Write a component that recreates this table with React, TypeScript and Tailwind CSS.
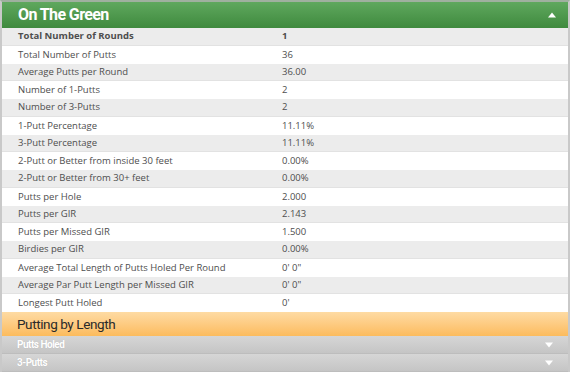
import React from "react";

const rows: [string, string][] = [
  ["Total Number of Rounds", "1"],
  ["Total Number of Putts", "36"],
  ["Average Putts per Round", "36.00"],
  ["Number of 1-Putts", "2"],
  ["Number of 3-Putts", "2"],
  ["1-Putt Percentage", "11.11%"],
  ["3-Putt Percentage", "11.11%"],
  ["2-Putt or Better from inside 30 feet", "0.00%"],
  ["2-Putt or Better from 30+ feet", "0.00%"],
  ["Putts per Hole", "2.000"],
  ["Putts per GIR", "2.143"],
  ["Putts per Missed GIR", "1.500"],
  ["Birdies per GIR", "0.00%"],
  ["Average Total Length of Putts Holed Per Round", "0' 0\""],
  ["Average Par Putt Length per Missed GIR", "0' 0\""],
  ["Longest Putt Holed", "0'"],
];

function Tri({ up }: { up?: boolean }) {
  return (
    <svg width="8" height="6" viewBox="0 0 8 6">
      {up ? <polygon points="4,0.5 8,5.5 0,5.5" fill="#fff" /> : <polygon points="0,0.5 8,0.5 4,5.5" fill="#fff" />}
    </svg>
  );
}

export default function App() {
  return (
    <div className="w-[570px] h-[375px] bg-white overflow-hidden" style={{ fontFamily: '"Open Sans", sans-serif' }}>
      <div className="border-x-2 border-t-2 border-x-[#c9c9c9] border-t-[#9fb09f]">
        <div className="h-[26px] bg-gradient-to-b from-[#5fa85e] to-[#3f8a3e] flex items-center justify-between pl-[16px] pr-[12px]">
          <span className="text-white text-[16px] font-bold tracking-[-0.6px] leading-none" style={{ fontFamily: '"Roboto", sans-serif' }}>
            On The Green
          </span>
          <Tri up />
        </div>
        <div className="flex flex-col">
          {rows.map(([k, v], i) => (
            <div
              key={k}
              className={`h-[17.75px] flex items-center text-[9.5px] text-[#4e4e4e] ${i % 2 === 0 ? "bg-[#ececec] border-b border-[#e2e2e2]" : "bg-white"} ${i === 0 ? "font-bold" : ""}`}
            >
              <span className="w-[280px] pl-[16px] whitespace-nowrap">{k}</span>
              <span>{v}</span>
            </div>
          ))}
        </div>
        <div className="h-[24px] bg-gradient-to-b from-[#fedba3] to-[#fcbb5c] flex items-center pl-[15px]">
          <span className="text-[13.5px] text-[#2a2a2a] tracking-[-0.4px]" style={{ fontFamily: '"Roboto", sans-serif' }}>
            Putting by Length
          </span>
        </div>
        <div className="h-[18px] bg-gradient-to-b from-[#d6d6d6] to-[#c5c5c5] border-b border-[#bdbdbd] flex items-center justify-between pl-[15px] pr-[15px]">
          <span className="text-white text-[10px] font-bold tracking-[-0.5px]" style={{ fontFamily: '"Roboto", sans-serif', textShadow: "0 0 1px rgba(0,0,0,0.15)" }}>
            Putts Holed
          </span>
          <Tri />
        </div>
        <div className="h-[18px] bg-gradient-to-b from-[#d6d6d6] to-[#c5c5c5] border-b border-[#bdbdbd] flex items-center justify-between pl-[15px] pr-[15px]">
          <span className="text-white text-[10px] font-bold tracking-[-0.5px]" style={{ fontFamily: '"Roboto", sans-serif', textShadow: "0 0 1px rgba(0,0,0,0.15)" }}>
            3-Putts
          </span>
          <Tri />
        </div>
      </div>
    </div>
  );
}
